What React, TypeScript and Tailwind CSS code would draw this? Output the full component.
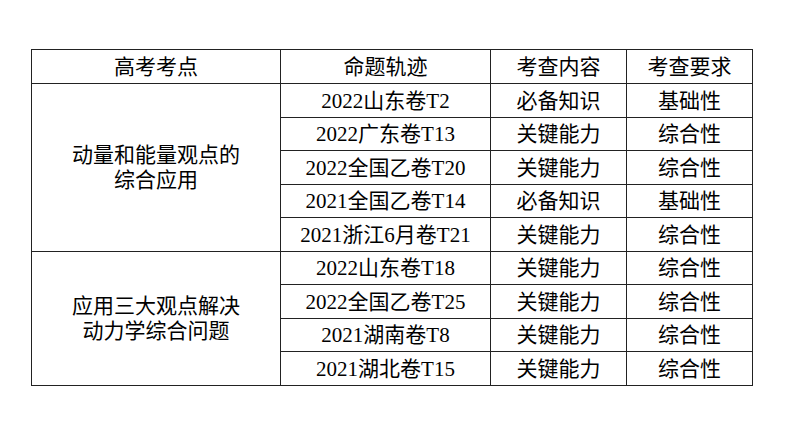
const groups = [
  {
    topic: ["动量和能量观点的", "综合应用"],
    rows: [
      ["2022山东卷T2", "必备知识", "基础性"],
      ["2022广东卷T13", "关键能力", "综合性"],
      ["2022全国乙卷T20", "关键能力", "综合性"],
      ["2021全国乙卷T14", "必备知识", "基础性"],
      ["2021浙江6月卷T21", "关键能力", "综合性"],
    ],
  },
  {
    topic: ["应用三大观点解决", "动力学综合问题"],
    rows: [
      ["2022山东卷T18", "关键能力", "综合性"],
      ["2022全国乙卷T25", "关键能力", "综合性"],
      ["2021湖南卷T8", "关键能力", "综合性"],
      ["2021湖北卷T15", "关键能力", "综合性"],
    ],
  },
];

const cell = "border border-[#222] text-center p-0 pt-[2px] align-middle";

export default function App() {
  return (
    <div
      className="w-[794px] h-[447px] bg-white text-[21px] text-black"
      style={{ fontFamily: '"Liberation Serif", "Noto Sans CJK SC", serif' }}
    >
      <div className="pt-[49px] pl-[31px]">
        <table className="border-collapse table-fixed w-[721px]">
          <colgroup>
            <col className="w-[249px]" />
            <col className="w-[210px]" />
            <col className="w-[136px]" />
            <col className="w-[126px]" />
          </colgroup>
          <thead>
            <tr className="h-[34px] leading-none">
              <th className={cell + " font-normal"}>高考考点</th>
              <th className={cell + " font-normal"}>命题轨迹</th>
              <th className={cell + " font-normal"}>考查内容</th>
              <th className={cell + " font-normal"}>考查要求</th>
            </tr>
          </thead>
          <tbody>
            {groups.map((g) =>
              g.rows.map((r, i) => (
                <tr key={g.topic[0] + i} className="h-[33.5px] leading-none">
                  {i === 0 && (
                    <td rowSpan={g.rows.length} className={cell + " leading-[25px]"}>
                      {g.topic.map((t) => (
                        <div key={t}>{t}</div>
                      ))}
                    </td>
                  )}
                  {r.map((c, j) => (
                    <td key={j} className={cell}>
                      {c}
                    </td>
                  ))}
                </tr>
              ))
            )}
          </tbody>
        </table>
      </div>
    </div>
  );
}
